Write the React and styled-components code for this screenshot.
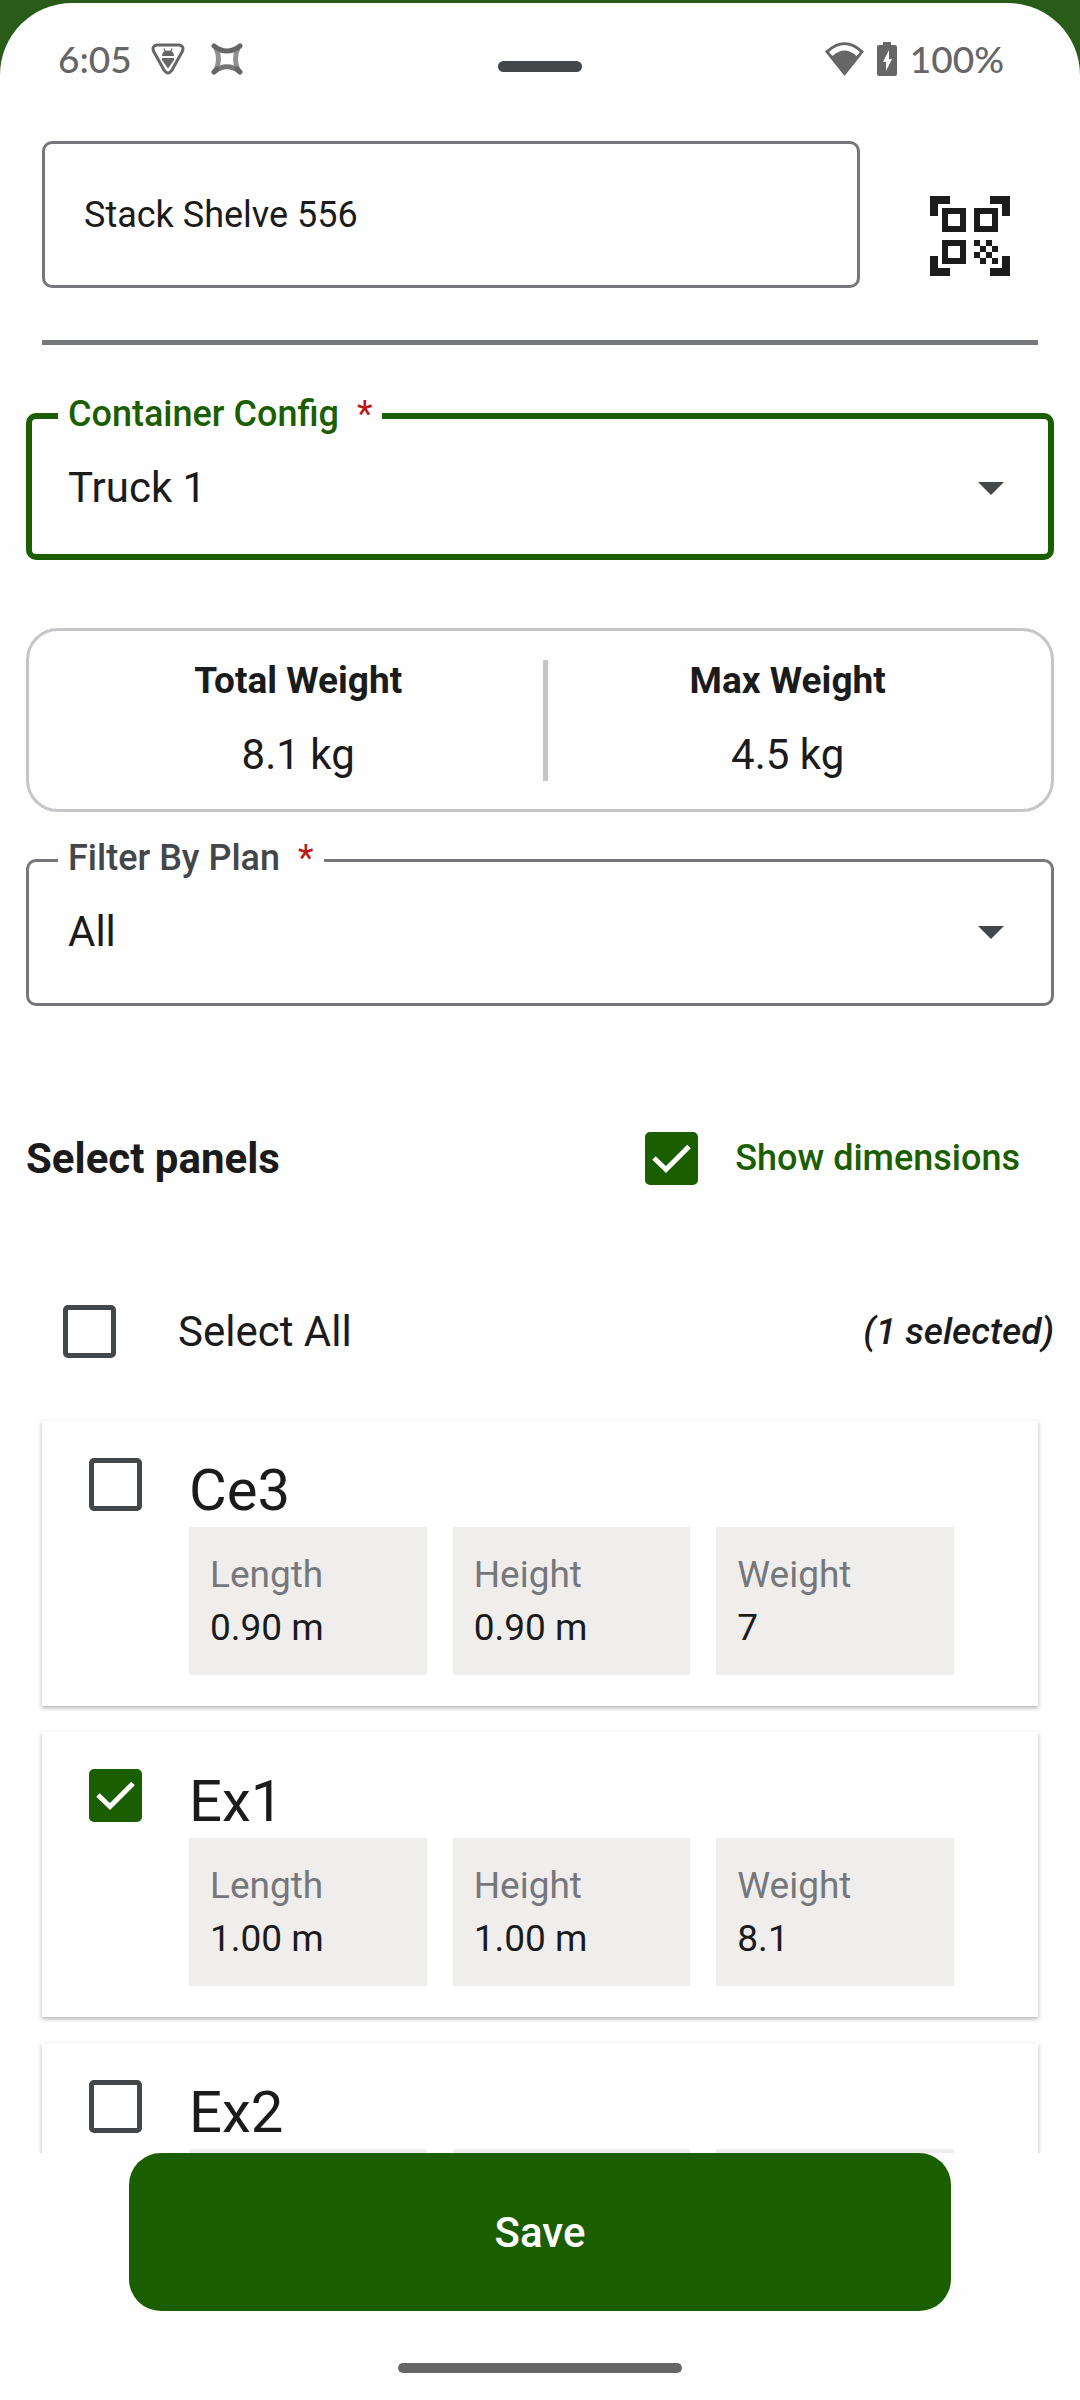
import React, { useState } from 'react'
import styled, { createGlobalStyle } from 'styled-components'

const green = '#1b5e00';
const ink = '#1b1b1c';
const dark = '#44474a';
const grey = '#76777b';
const statusGrey = '#666666';

const fields = ['Length', 'Height', 'Weight'];

const initialPanels = [
  { id: 'ce3', name: 'Ce3', values: ['0.90 m', '0.90 m', '7'] },
  { id: 'ex1', name: 'Ex1', values: ['1.00 m', '1.00 m', '8.1'] },
  { id: 'ex2', name: 'Ex2', values: [] },
];

function DebugIcon() {
  return (
    <svg width="34" height="32" viewBox="0 0 34 32" fill="none" aria-hidden="true">
      <path d="M6 2H28Q34 3 31 9L21 27Q17 33 13 27L3 9Q0 3 6 2Z" stroke={statusGrey} strokeWidth="3" />
      <path d="M11 13Q11 7.500 17 7.500Q23 7.500 23 13Z" fill={statusGrey} />
      <path d="M13 5.500L14.500 9M21 5.500L19.500 9" stroke={statusGrey} strokeWidth="1.200" />
      <path d="M11 15H23V17L17 25.500L11 17Z" fill={statusGrey} />
    </svg>
  )
}

function StarIcon() {
  return (
    <svg width="32" height="32" viewBox="0 0 32 32" fill="none" strokeLinecap="round" aria-hidden="true">
      <path d="M5 5Q10 16 5 27M27 5Q22 16 27 27" stroke="#909090" strokeWidth="5" />
      <path d="M3.500 28.500Q16 19 28.500 28.500" stroke="#777777" strokeWidth="5" />
      <path d="M3 3Q16 13 29 3" stroke={statusGrey} strokeWidth="5" />
      <path d="M3 29L6 26M29 29L26 26" stroke={statusGrey} strokeWidth="5" />
    </svg>
  )
}

function WifiIcon() {
  return (
    <svg width="39" height="34" viewBox="0 0 39 34" aria-hidden="true">
      <path
        fill={statusGrey}
        fillRule="evenodd"
        d="M0 9.500Q19.500 -9 39 9.500L19.500 34ZM4 10L7.500 14Q19.500 3 31.500 14L35 10Q19.500 -4 4 10Z"
      />
    </svg>
  )
}

function BatteryIcon() {
  return (
    <svg width="20" height="34" viewBox="0 0 20 34" aria-hidden="true">
      <path
        fill={statusGrey}
        fillRule="evenodd"
        d="M6 0H14V3H18Q20 3 20 5V32Q20 34 18 34H2Q0 34 0 32V5Q0 3 2 3H6ZM12 8L6 20H9V29L15 17H12Z"
      />
    </svg>
  )
}

function ScanIcon() {
  return (
    <svg width="80" height="80" viewBox="0 0 80 80" fill={ink} aria-hidden="true">
      <path d="M0 0H20V8H8V20H0ZM60 0H80V20H72V8H60ZM0 60H8V72H20V80H0ZM72 60H80V80H60V72H72Z" />
      <path
        fillRule="evenodd"
        d="M12 12H36V36H12ZM18 18V30H30V18ZM44 12H68V36H44ZM50 18V30H62V18ZM12 44H36V68H12ZM18 50V62H30V50Z"
      />
      <path d="M44 44h6v6h-6zM56 44h6v6h-6zM50 50h6v6h-6zM62 50h6v6h-6zM44 56h6v6h-6zM56 56h6v6h-6zM50 62h6v6h-6zM62 62h6v6h-6z" />
    </svg>
  )
}

function Checkbox({ id, checked, onChange }) {
  return (
    <CheckWrap>
      <input type="checkbox" id={id} checked={checked} onChange={onChange} />
      {checked && (
        <svg width="53" height="53" viewBox="0 0 53 53" fill="none" aria-hidden="true">
          <path d="M9 26L21 37.500L44 14.500" stroke="#ffffff" strokeWidth="5" />
        </svg>
      )}
    </CheckWrap>
  )
}

function Dropdown({ id, label, focused, value, options, onChange }) {
  return (
    <Field $focused={focused}>
      <legend>
        <label htmlFor={id}>{label}</label>
        <Required>*</Required>
      </legend>
      <SelectWrap>
        <select id={id} value={value} onChange={(e) => onChange(e.target.value)}>
          {options.map((o) => <option key={o}>{o}</option>)}
        </select>
        <svg width="26" height="13" viewBox="0 0 26 13" aria-hidden="true">
          <path d="M0 0H26L13 13Z" fill={dark} />
        </svg>
      </SelectWrap>
    </Field>
  )
}

function PanelCard({ panel, checked, showDimensions, onToggle }) {
  return (
    <Card>
      <CardCheck>
        <Checkbox id={panel.id} checked={checked} onChange={onToggle} />
      </CardCheck>
      <CardBody>
        <CardTitle htmlFor={panel.id}>{panel.name}</CardTitle>
        {showDimensions && (
          <Dimensions>
            {/* a panel without measurements keeps its empty boxes */}
            {fields.map((field, i) => (
              <div key={field}>
                {panel.values[i] && <><dt>{field}</dt><dd>{panel.values[i]}</dd></>}
              </div>
            ))}
          </Dimensions>
        )}
      </CardBody>
    </Card>
  )
}

export default function App() {
  const [name, setName] = useState('Stack Shelve 556');
  const [config, setConfig] = useState('Truck 1');
  const [plan, setPlan] = useState('All');
  const [showDimensions, setShowDimensions] = useState(true);
  const [selected, setSelected] = useState(['ex1']);

  const allSelected = selected.length === initialPanels.length;
  const toggle = (id) =>
    setSelected(selected.includes(id) ? selected.filter((s) => s !== id) : [...selected, id]);

  return (
    <Screen>
      <GlobalStyle />
      <Sheet>
        <StatusBar>
          <StatusGroup>
            <time>6:05</time>
            <StatusIcons><DebugIcon /><StarIcon /></StatusIcons>
          </StatusGroup>
          <Handle />
          <StatusGroup $end>
            <WifiIcon />
            <BatteryIcon />
            <span>100%</span>
          </StatusGroup>
        </StatusBar>

        <NameRow>
          <NameInput aria-label="Name" value={name} onChange={(e) => setName(e.target.value)} />
          <ScanButton type="button" aria-label="Scan code"><ScanIcon /></ScanButton>
        </NameRow>
        <Divider />

        <Form>
          <Dropdown id="config" label="Container Config" focused value={config} options={['Truck 1', 'Truck 2']} onChange={setConfig} />
          <WeightCard>
            <Weight><h2>Total Weight</h2><p>8.1 kg</p></Weight>
            <WeightDivider />
            <Weight><h2>Max Weight</h2><p>4.5 kg</p></Weight>
          </WeightCard>
          <Dropdown id="plan" label="Filter By Plan" value={plan} options={['All']} onChange={setPlan} />

          <PanelsHeader>
            <h1>Select panels</h1>
            <ShowDimensions>
              <Checkbox id="dimensions" checked={showDimensions} onChange={() => setShowDimensions(!showDimensions)} />
              <label htmlFor="dimensions">Show dimensions</label>
            </ShowDimensions>
          </PanelsHeader>
          <SelectAllRow>
            <Checkbox
              id="all"
              checked={allSelected}
              onChange={() => setSelected(allSelected ? [] : initialPanels.map((p) => p.id))}
            />
            <label htmlFor="all">Select All</label>
            <em>({selected.length} selected)</em>
          </SelectAllRow>
        </Form>

        <PanelList>
          {initialPanels.map((panel) => (
            <PanelCard
              key={panel.id}
              panel={panel}
              checked={selected.includes(panel.id)}
              showDimensions={showDimensions}
              onToggle={() => toggle(panel.id)}
            />
          ))}
        </PanelList>

        <Footer>
          <SaveButton type="button">Save</SaveButton>
          <HomeBar />
        </Footer>
      </Sheet>
    </Screen>
  )
}

const GlobalStyle = createGlobalStyle`
* {
    box-sizing: border-box;
}
body {
    margin: 0;
    font-family: Roboto, sans-serif;
    font-size: 37px;
    color: ${ink};
}
h1, h2, p, dl, dt, dd {
    margin: 0;
}
input, select, button {
    font: inherit;
    color: inherit;
}
`

const Screen = styled.div`
height: 100vh;
padding-top: 3px;
background-color: #285c18;
`

const Sheet = styled.main`
height: 100%;
display: flex;
flex-direction: column;
background-color: #fefefe;
border-radius: 72px 72px 0 0;
overflow: hidden;
`

const StatusBar = styled.header`
display: grid;
grid-template-columns: 1fr auto 1fr;
align-items: center;
flex-shrink: 0;
height: 126px;
padding: 0 58px;
`

const StatusGroup = styled.div`
display: flex;
align-items: center;
justify-content: ${({ $end }) => ($end ? 'flex-end' : 'flex-start')};
gap: ${({ $end }) => ($end ? '13px' : '19px')};
padding: ${({ $end }) => ($end ? '0 18px 14px 0' : '0 0 14px')};
font-family: Lato, sans-serif;
font-size: 37px;
font-weight: 500;
line-height: 44px;
color: ${statusGrey};
`

const StatusIcons = styled.div`
display: flex;
align-items: center;
gap: 26px;
`

const Handle = styled.div`
width: 84px;
height: 11px;
border-radius: 6px;
background-color: ${dark};
`

const NameRow = styled.div`
display: flex;
align-items: flex-end;
gap: 42px;
flex-shrink: 0;
margin: 12px 42px 0;
`

const NameInput = styled.input`
flex: 1;
min-width: 0;
height: 147px;
padding: 0 39px;
border: 3px solid ${grey};
border-radius: 10px;
background: transparent;
outline: none;
font-size: 36px;
`

const ScanButton = styled.button`
display: flex;
align-items: center;
justify-content: center;
width: 136px;
height: 105px;
padding: 0;
border: 0;
background: transparent;
`

const Divider = styled.hr`
flex-shrink: 0;
height: 5px;
margin: 52px 42px 0;
border: 0;
background-color: ${grey};
`

const Form = styled.section`
flex-shrink: 0;
padding: 47px 26px 0;
`

const Field = styled.fieldset`
min-width: 0;
margin: 0;
padding: 0 ${({ $focused }) => ($focused ? '36px 20px' : '39px 25px')};
border: ${({ $focused }) => ($focused ? `6px solid ${green}` : `3px solid ${grey}`)};
border-radius: 10px;

legend{
    margin-left: -10px;
    padding: 0 10px 4px;
    line-height: 44px;
    font-size: 36px;
    font-weight: 500;
    color: ${({ $focused }) => ($focused ? green : dark)};
}
`

const Required = styled.span`
margin-left: 18px;
font-weight: 400;
color: #ba1a1a;
`

const SelectWrap = styled.div`
display: grid;
align-items: center;

select{
    grid-area: 1 / 1;
    width: 100%;
    height: 94px;
    padding: 0;
    border: 0;
    outline: none;
    background: transparent;
    appearance: none;
    font-size: 42px;
}
svg{
    grid-area: 1 / 1;
    justify-self: end;
    margin: 3px 8px 0 0;
    pointer-events: none;
}
`

const WeightCard = styled.div`
display: flex;
align-items: center;
height: 184px;
margin: 68px 0 24px;
padding: 0 24px;
border: 3px solid #c5c6ca;
border-radius: 32px;
`

const Weight = styled.div`
flex: 1 1 auto;
text-align: center;

h2{
    font-size: 37px;
    line-height: 53px;
    font-weight: 700;
}
p{
    margin-top: 16px;
    font-size: 42px;
    line-height: 63px;
}
`

const WeightDivider = styled.div`
width: 5px;
height: 121px;
background-color: #c5c6ca;
`

const PanelsHeader = styled.div`
display: flex;
align-items: center;
justify-content: space-between;
height: 126px;
margin-top: 89px;
padding-right: 34px;

h1{
    font-size: 42px;
    font-weight: 700;
}
`

const ShowDimensions = styled.div`
display: flex;
align-items: center;
gap: 37px;
font-size: 36px;
font-weight: 500;
color: ${green};
`

const SelectAllRow = styled.div`
display: flex;
align-items: center;
height: 126px;
margin-top: 47px;
padding-left: 37px;

label{
    flex: 1;
    margin-left: 62px;
    font-size: 42px;
}
em{
    font-weight: 500;
}
`

const CheckWrap = styled.span`
display: grid;
flex-shrink: 0;

input{
    grid-area: 1 / 1;
    width: 53px;
    height: 53px;
    margin: 0;
    appearance: none;
    border: 5px solid ${dark};
    border-radius: 5px;
}
input:checked{
    border-color: ${green};
    background-color: ${green};
}
svg{
    grid-area: 1 / 1;
    pointer-events: none;
}
`

const PanelList = styled.div`
flex: 1;
min-height: 0;
display: flex;
flex-direction: column;
gap: 26px;
padding: 27px 42px 0;
overflow-y: auto;
scrollbar-width: none;
`

const Card = styled.article`
display: flex;
flex-shrink: 0;
gap: 47px;
padding: 32px 84px 31px 47px;
background-color: #ffffff;
box-shadow: 0 2px 4px rgba(0, 0, 0, 0.3);
`

const CardCheck = styled.div`
padding-top: 5px;
`

const CardBody = styled.div`
flex: 1;
`

const CardTitle = styled.label`
display: block;
font-size: 58px;
line-height: 74px;
`

const Dimensions = styled.dl`
display: grid;
grid-template-columns: repeat(3, 1fr);
gap: 26px;
line-height: 53px;

div{
    min-height: 148px;
    padding: 21px;
    background-color: #efeeed;
}
dt{
    color: ${grey};
}
`

const Footer = styled.footer`
display: flex;
flex-direction: column;
align-items: center;
flex-shrink: 0;
padding: 0 129px 27px;
`

const SaveButton = styled.button`
width: 100%;
height: 158px;
border: 0;
border-radius: 32px;
background-color: ${green};
font-size: 42px;
font-weight: 500;
color: #ffffff;
`

const HomeBar = styled.div`
width: 284px;
height: 10px;
margin-top: 52px;
border-radius: 5px;
background-color: ${statusGrey};
`
